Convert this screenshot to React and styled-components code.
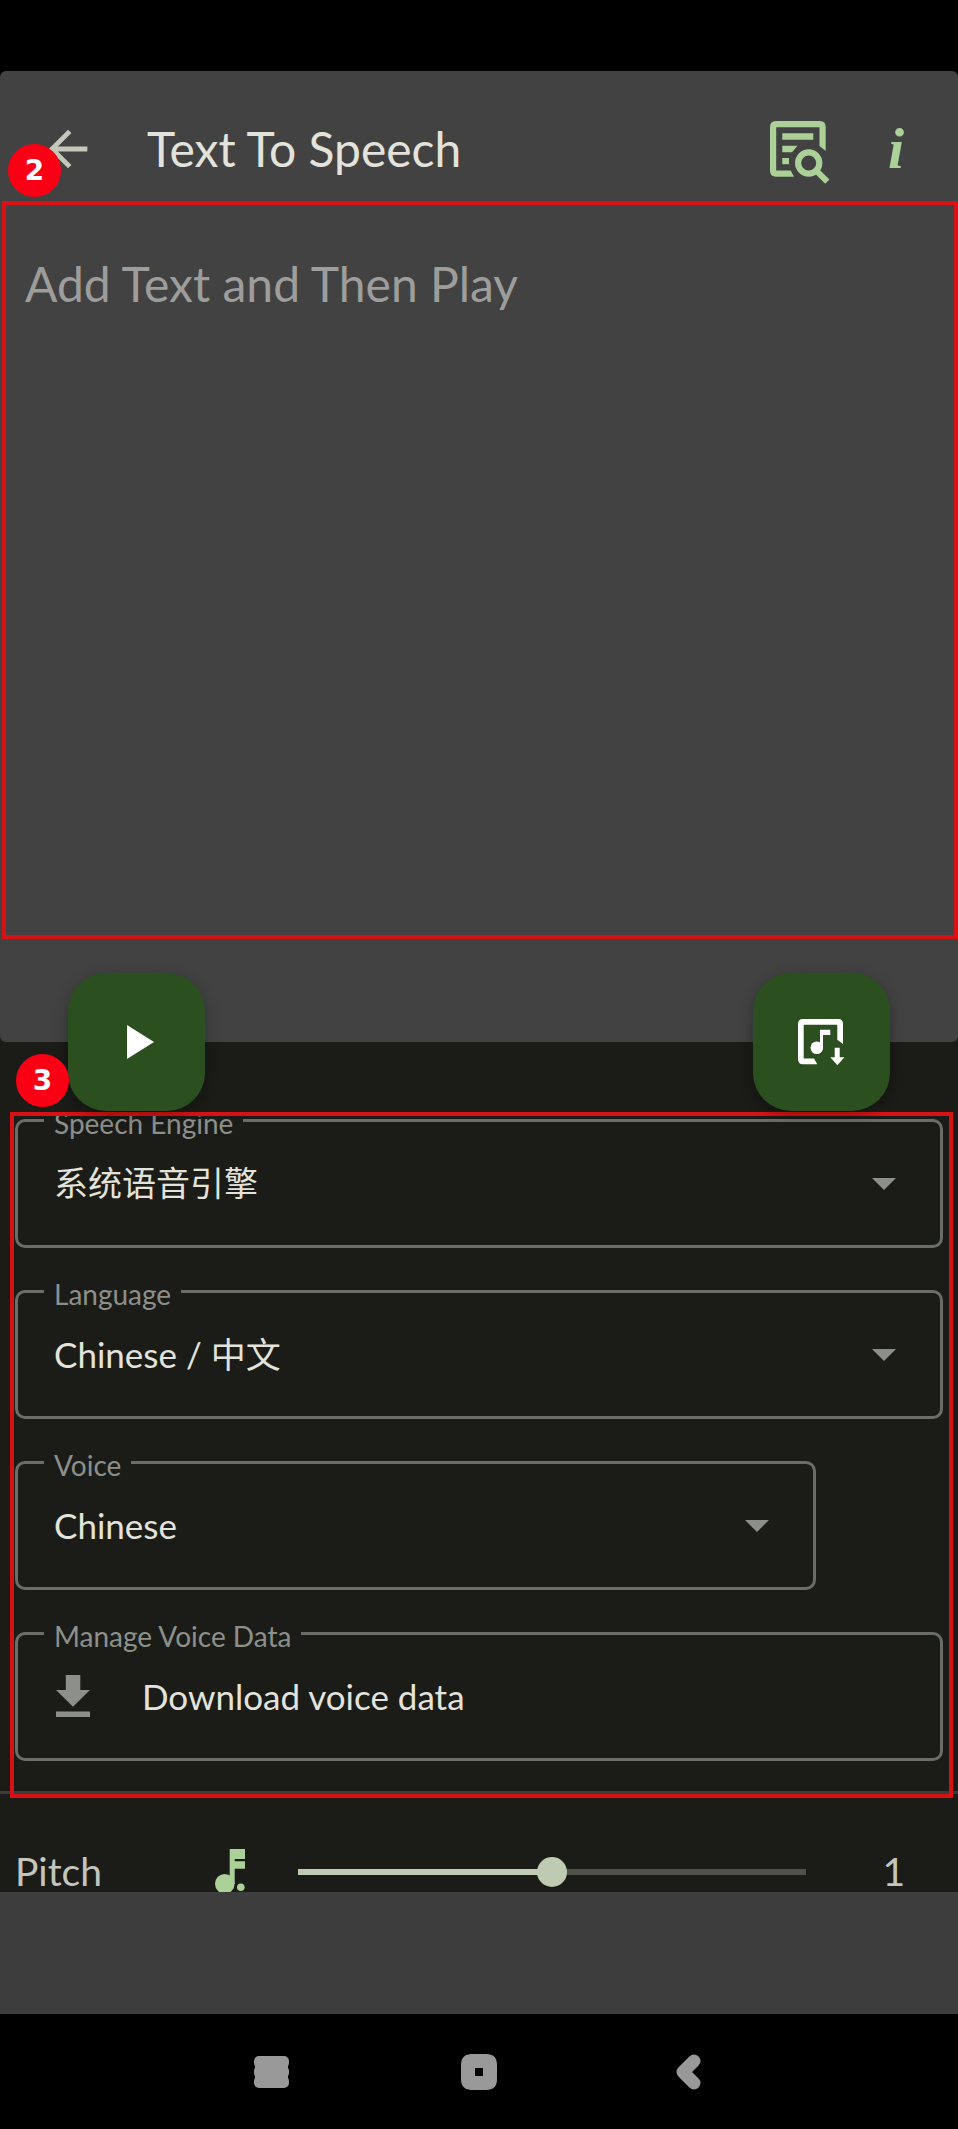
import React, { useState } from 'react';
import styled, { createGlobalStyle } from 'styled-components';

const GlobalStyle = createGlobalStyle`
  :root {
    --black: #000000;
    --surface: #424242;
    --overlay: #3d3d3d;
    --dark: #1b1c18;
    --outline: #6b6d67;
    --muted: #8d908a;
    --text: #e3e3dc;
    --text-dim: #c4c6be;
    --green: #abd098;
    --green-dark: #2c4f1f;
    --sage: #bfcab2;
    --red: #d81214;
    --font-sans: Lato, 'Noto Sans CJK SC', sans-serif;
  }

  *, *::before, *::after {
    box-sizing: border-box;
  }

  body {
    margin: 0;
    background-color: var(--black);
    color: var(--text);
    font-family: var(--font-sans);
  }

  button, select, textarea, input {
    margin: 0;
    padding: 0;
    border: 0;
    background: none;
    color: inherit;
    font: inherit;
  }

  svg {
    display: block;
  }
`;

const Page = styled.div`
  display: flex;
  flex-direction: column;
  min-height: 100vh;
  background-color: var(--black);
`;

const StatusBar = styled.div`
  height: 71px;
`;

const Content = styled.main`
  background-color: var(--dark);
`;

const EditorCard = styled.section`
  padding-bottom: 103px;
  border-radius: 6px;
  background-color: var(--surface);
  box-shadow: 0 -6px 0 var(--black);
`;

const Header = styled.header`
  display: flex;
  align-items: center;
  height: 130px;
  padding: 26px 32px 0 39px;
`;

const Title = styled.h1`
  flex: 1;
  margin: 0 0 0 50px;
  font-size: 48px;
  font-weight: 400;
  line-height: 60px;
`;

const IconButton = styled.button`
  display: flex;
  align-items: center;
  justify-content: center;
  color: ${({ $color }) => $color || 'var(--green)'};
`;

const InfoButton = styled(IconButton)`
  width: 60px;
  margin-left: 36px;
  font-family: 'Liberation Serif', serif;
  font-size: 58px;
  font-style: italic;
  font-weight: 700;
  line-height: 60px;
`;

const Marked = styled.div`
  position: relative;
`;

const Frame = styled.div`
  position: absolute;
  inset: ${({ $inset }) => $inset};
  border: 4px solid var(--red);
  pointer-events: none;
`;

const Badge = styled.span`
  position: absolute;
  top: -57px;
  left: ${({ $left }) => $left};
  z-index: 2;
  width: 53px;
  height: 53px;
  border-radius: 50%;
  background-color: #fb0014;
  color: #ffffff;
  font-family: 'DejaVu Sans', sans-serif;
  font-size: 28px;
  font-weight: 700;
  line-height: 53px;
  text-align: center;
`;

const TextBox = styled.textarea`
  display: block;
  width: 100%;
  height: 738px;
  padding: 54px 25px;
  outline: 0;
  resize: none;
  font-size: 48px;
  line-height: 58px;

  &::placeholder {
    color: #9d9d9b;
    opacity: 1;
  }
`;

const FabRow = styled.div`
  position: relative;
  z-index: 1;
  display: flex;
  justify-content: space-between;
  margin-top: -69px;
  padding: 0 68px;
`;

const Fab = styled.button`
  display: flex;
  align-items: center;
  justify-content: center;
  width: 137px;
  height: 138px;
  border-radius: 38px;
  background-color: var(--green-dark);
  color: #ffffff;
  box-shadow: 0 4px 14px rgba(0, 0, 0, 0.3);
`;

const Scroller = styled.div`
  max-height: 781px;
  overflow: hidden;
`;

const FieldGroup = styled.div`
  position: relative;
  display: flex;
  flex-direction: column;
  gap: 42px;
  padding: 8px 15px 30px;
  border-bottom: 3px solid #3c3c3a;
`;

const Field = styled.div`
  position: relative;
  display: grid;
  align-items: center;
  height: 129px;
  margin-right: ${({ $short }) => ($short ? '127px' : '0')};
  border: 3px solid var(--outline);
  border-radius: 10px;
`;

const FieldLabel = styled.label`
  position: absolute;
  top: -14px;
  left: 26px;
  padding: 0 10px;
  background-color: var(--dark);
  color: var(--muted);
  font-size: 28px;
  line-height: 30px;
`;

const Select = styled.select`
  grid-area: 1 / 1;
  width: 100%;
  height: 100%;
  padding: 0 36px 2px;
  appearance: none;
  outline: 0;
  font-size: 35px;

  &:lang(zh) {
    font-size: 34px;
  }
`;

const Caret = styled.svg`
  grid-area: 1 / 1;
  justify-self: end;
  margin-right: 44px;
  color: var(--muted);
  pointer-events: none;
`;

const DownloadButton = styled.button`
  display: flex;
  align-items: center;
  gap: 52px;
  width: 100%;
  height: 100%;
  padding: 0 38px 2px;
  font-size: 35px;
  text-align: left;

  svg {
    color: var(--muted);
  }
`;

const SliderRow = styled.div`
  display: flex;
  align-items: center;
  height: 156px;
  padding: 0 15px;
  color: var(--text-dim);
  font-size: 39px;
  line-height: 38px;

  svg {
    color: var(--green);
  }
`;

const SliderLabel = styled.label`
  flex: 0 0 200px;
  padding-bottom: 2px;
`;

const Slider = styled.input`
  flex: 1;
  min-width: 0;
  height: 30px;
  margin-left: 53px;
  appearance: none;

  &::-webkit-slider-runnable-track {
    height: 6px;
    background: linear-gradient(to right, var(--sage) 50%, #50534c 50%);
  }

  &::-webkit-slider-thumb {
    appearance: none;
    width: 30px;
    height: 30px;
    margin-top: -12px;
    border-radius: 50%;
    background-color: var(--sage);
  }
`;

const SliderValue = styled.output`
  flex: 0 0 137px;
  padding: 0 38px 2px 0;
  text-align: right;
`;

const BottomSheet = styled.div`
  height: 122px;
  background-color: var(--overlay);
`;

const SystemNav = styled.nav`
  display: flex;
  align-items: center;
  justify-content: center;
  height: 115px;
`;

const NavButton = styled.button`
  display: flex;
  justify-content: center;
  width: 208px;
  color: #999999;
`;

const BackIcon = () => (
  <svg width="58" height="58" viewBox="0 0 24 24" fill="currentColor" aria-hidden="true">
    <path d="M20 11H7.83l5.59-5.59L12 4l-8 8 8 8 1.41-1.41L7.83 13H20z" />
  </svg>
);

const PreviewIcon = () => (
  <svg width="60" height="70" viewBox="0 -7 60 70" fill="currentColor" aria-hidden="true">
    <path d="M6 0H50Q55.7 0 55.7 6V30L49.5 25V6.2H6.2V49.5H20.7L24 55.7H6Q0 55.7 0 50V6Q0 0 6 0z" />
    <path d="M12.3 12.3H43.3V18.7H12.3zM12.3 24.7H27.5L22 31.3H12.3zM12.3 37H19V43.3H12.3z" />
    <circle cx="38.7" cy="42" r="10.6" fill="none" stroke="currentColor" strokeWidth="6.2" />
    <path d="M46.5 49.8L57.3 60.6" stroke="currentColor" strokeWidth="6" />
  </svg>
);

const PlayIcon = () => (
  <svg width="34" height="34" viewBox="-7 0 34 34" fill="currentColor" aria-hidden="true">
    <path d="M0 0L27 17L0 34z" />
  </svg>
);

const SaveAudioIcon = () => (
  <svg width="47" height="47" viewBox="0 0 47 47" fill="currentColor" aria-hidden="true">
    <path d="M5 0H40Q45 0 45 5V25L39.3 20.7V5.7H5.7V39.6H16L19.3 45.3H5Q0 45.3 0 40V5Q0 0 5 0z" />
    <path d="M22 10.7H32.3V16H25V29H22z" />
    <circle cx="18.8" cy="28.7" r="6.3" />
    <path d="M36.7 28.7H41.7V38.3H46.5L39.3 46.3L32.3 38.3H36.7z" />
  </svg>
);

const CaretIcon = () => (
  <Caret width="24" height="12" viewBox="0 0 24 12" fill="currentColor" aria-hidden="true">
    <path d="M0 0H24L12 12z" />
  </Caret>
);

const DownloadIcon = () => (
  <svg width="34" height="42" viewBox="0 0 34 42" fill="currentColor" aria-hidden="true">
    <path d="M9.8 0H24.3V15H34L17 31.7L0 15H9.8zM0 36.4H34V42H0z" />
  </svg>
);

const PitchIcon = () => (
  <svg width="30" height="46" viewBox="0 0 30 46" fill="currentColor" aria-hidden="true">
    <path d="M14.7 0H30V10H19.7V12.3H30V19.7H19.7V35H14.7z" />
    <circle cx="9.8" cy="34.7" r="9.8" />
    <circle cx="25.8" cy="38.3" r="3.8" />
  </svg>
);

const RecentsIcon = () => (
  <svg width="38" height="36" viewBox="-2 0 38 36" fill="currentColor" aria-hidden="true">
    <rect x="0" y="2" width="35" height="12" rx="5" />
    <rect x="0" y="12" width="35" height="12" rx="5" />
    <rect x="0" y="22" width="35" height="12" rx="5" />
    <rect x="1" y="7" width="33" height="22" />
  </svg>
);

const HomeIcon = () => (
  <svg width="36" height="36" viewBox="0 0 36 36" fill="currentColor" aria-hidden="true">
    <path
      fillRule="evenodd"
      d="M11 0H25Q36 0 36 11V25Q36 36 25 36H11Q0 36 0 25V11Q0 0 11 0zM14 14V22H22V14z"
    />
  </svg>
);

const NavBackIcon = () => (
  <svg width="36" height="36" viewBox="0 0 36 36" fill="none" aria-hidden="true">
    <path
      d="M25 7L14 18L25 29"
      stroke="currentColor"
      strokeWidth="13"
      strokeLinecap="round"
      strokeLinejoin="round"
    />
  </svg>
);

const SelectField = ({ id, label, options, lang, short }) => (
  <Field $short={short}>
    <FieldLabel htmlFor={id}>{label}</FieldLabel>
    <Select id={id} lang={lang}>
      {options.map(option => (
        <option key={option}>{option}</option>
      ))}
    </Select>
    <CaretIcon />
  </Field>
);

const App = () => {
  const [text, setText] = useState('');
  const [pitch, setPitch] = useState(1);

  return (
    <Page>
      <GlobalStyle />
      <StatusBar />
      <Content>
        <EditorCard>
          <Header>
            <IconButton type="button" aria-label="Back" $color="#c4c8ba">
              <BackIcon />
            </IconButton>
            <Title>Text To Speech</Title>
            <IconButton type="button" aria-label="Preview text">
              <PreviewIcon />
            </IconButton>
            <InfoButton type="button" aria-label="Info">
              i
            </InfoButton>
          </Header>
          <Marked>
            <TextBox
              aria-label="Text"
              placeholder="Add Text and Then Play"
              value={text}
              onChange={e => setText(e.target.value)}
            />
            <Frame $inset="0 0 0 2px" />
            <Badge $left="8px">2</Badge>
          </Marked>
        </EditorCard>

        <FabRow>
          <Fab type="button" aria-label="Play">
            <PlayIcon />
          </Fab>
          <Fab type="button" aria-label="Save audio">
            <SaveAudioIcon />
          </Fab>
        </FabRow>

        <Marked>
          <Badge $left="16px">3</Badge>
          <Scroller>
            <FieldGroup>
              <SelectField id="engine" label="Speech Engine" options={['系统语音引擎']} lang="zh" />
              <SelectField id="language" label="Language" options={['Chinese / 中文']} />
              <SelectField id="voice" label="Voice" options={['Chinese']} short />
              <Field>
                <FieldLabel htmlFor="manage">Manage Voice Data</FieldLabel>
                <DownloadButton id="manage" type="button">
                  <DownloadIcon />
                  Download voice data
                </DownloadButton>
              </Field>
              <Frame $inset="1px 5px -7px 10px" />
            </FieldGroup>
            <SliderRow>
              <SliderLabel htmlFor="pitch">Pitch</SliderLabel>
              <PitchIcon />
              <Slider
                id="pitch"
                type="range"
                min="0"
                max="2"
                step="0.1"
                value={pitch}
                onChange={e => setPitch(Number(e.target.value))}
              />
              <SliderValue htmlFor="pitch">{pitch}</SliderValue>
            </SliderRow>
          </Scroller>
        </Marked>
      </Content>
      <BottomSheet />
      <SystemNav>
        <NavButton type="button" aria-label="Recent apps">
          <RecentsIcon />
        </NavButton>
        <NavButton type="button" aria-label="Home">
          <HomeIcon />
        </NavButton>
        <NavButton type="button" aria-label="Back">
          <NavBackIcon />
        </NavButton>
      </SystemNav>
    </Page>
  );
};

export default App;
